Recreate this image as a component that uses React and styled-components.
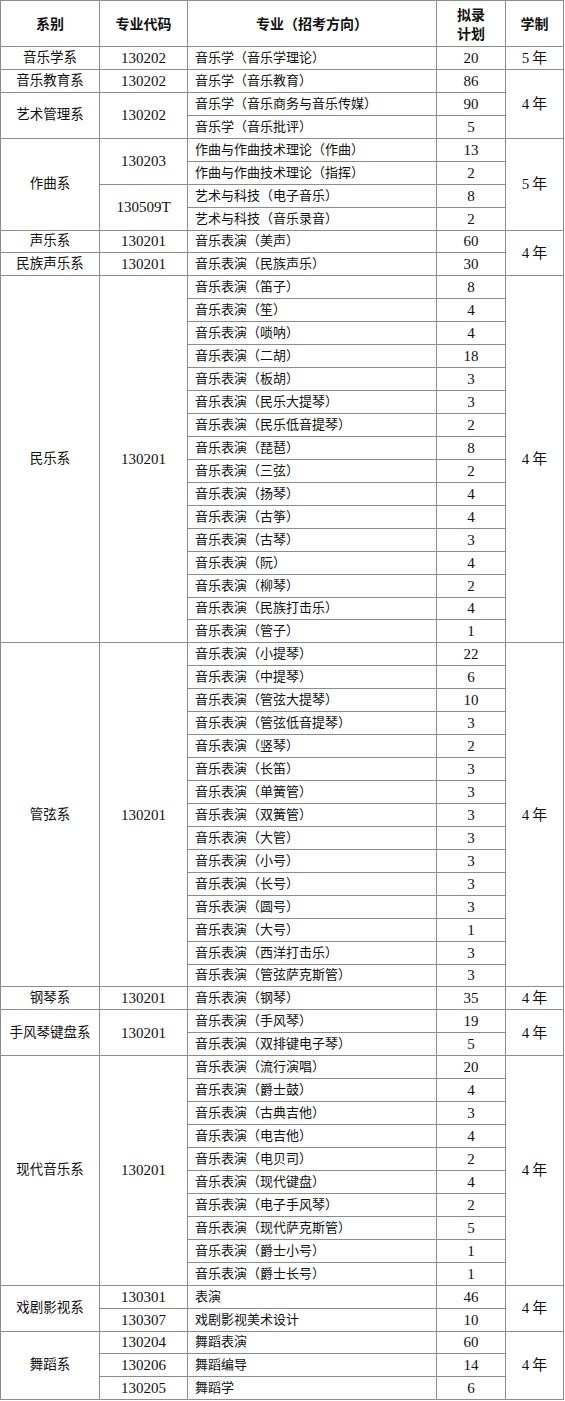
import React from 'react';
import styled, { createGlobalStyle } from 'styled-components';

const GlobalStyle = createGlobalStyle`
  html, body {
    margin: 0;
    padding: 0;
    background: #fff;
  }
`;

const perf = (list) => list.map((n) => [`音乐表演（${n[0]}）`, n[1]]);

// year: value shown in 学制 column, yearSpan: rows it covers (0 = merged above)
const departments = [
  { name: '音乐学系', year: '5年', yearSpan: 1, groups: [{ code: '130202', rows: [['音乐学（音乐学理论）', 20]] }] },
  { name: '音乐教育系', year: '4年', yearSpan: 3, groups: [{ code: '130202', rows: [['音乐学（音乐教育）', 86]] }] },
  {
    name: '艺术管理系',
    yearSpan: 0,
    groups: [{ code: '130202', rows: [['音乐学（音乐商务与音乐传媒）', 90], ['音乐学（音乐批评）', 5]] }],
  },
  {
    name: '作曲系',
    year: '5年',
    yearSpan: 4,
    groups: [
      { code: '130203', rows: [['作曲与作曲技术理论（作曲）', 13], ['作曲与作曲技术理论（指挥）', 2]] },
      { code: '130509T', rows: [['艺术与科技（电子音乐）', 8], ['艺术与科技（音乐录音）', 2]] },
    ],
  },
  { name: '声乐系', year: '4年', yearSpan: 2, groups: [{ code: '130201', rows: [['音乐表演（美声）', 60]] }] },
  { name: '民族声乐系', yearSpan: 0, groups: [{ code: '130201', rows: [['音乐表演（民族声乐）', 30]] }] },
  {
    name: '民乐系',
    year: '4年',
    yearSpan: 16,
    groups: [
      {
        code: '130201',
        rows: perf([
          ['笛子', 8], ['笙', 4], ['唢呐', 4], ['二胡', 18], ['板胡', 3], ['民乐大提琴', 3],
          ['民乐低音提琴', 2], ['琵琶', 8], ['三弦', 2], ['扬琴', 4], ['古筝', 4], ['古琴', 3],
          ['阮', 4], ['柳琴', 2], ['民族打击乐', 4], ['管子', 1],
        ]),
      },
    ],
  },
  {
    name: '管弦系',
    year: '4年',
    yearSpan: 15,
    groups: [
      {
        code: '130201',
        rows: perf([
          ['小提琴', 22], ['中提琴', 6], ['管弦大提琴', 10], ['管弦低音提琴', 3], ['竖琴', 2],
          ['长笛', 3], ['单簧管', 3], ['双簧管', 3], ['大管', 3], ['小号', 3], ['长号', 3],
          ['圆号', 3], ['大号', 1], ['西洋打击乐', 3], ['管弦萨克斯管', 3],
        ]),
      },
    ],
  },
  { name: '钢琴系', year: '4年', yearSpan: 1, groups: [{ code: '130201', rows: perf([['钢琴', 35]]) }] },
  {
    name: '手风琴键盘系',
    year: '4年',
    yearSpan: 2,
    groups: [{ code: '130201', rows: perf([['手风琴', 19], ['双排键电子琴', 5]]) }],
  },
  {
    name: '现代音乐系',
    year: '4年',
    yearSpan: 10,
    groups: [
      {
        code: '130201',
        rows: perf([
          ['流行演唱', 20], ['爵士鼓', 4], ['古典吉他', 3], ['电吉他', 4], ['电贝司', 2],
          ['现代键盘', 4], ['电子手风琴', 2], ['现代萨克斯管', 5], ['爵士小号', 1], ['爵士长号', 1],
        ]),
      },
    ],
  },
  {
    name: '戏剧影视系',
    year: '4年',
    yearSpan: 2,
    groups: [
      { code: '130301', rows: [['表演', 46]] },
      { code: '130307', rows: [['戏剧影视美术设计', 10]] },
    ],
  },
  {
    name: '舞蹈系',
    year: '4年',
    yearSpan: 3,
    groups: [
      { code: '130204', rows: [['舞蹈表演', 60]] },
      { code: '130206', rows: [['舞蹈编导', 14]] },
      { code: '130205', rows: [['舞蹈学', 6]] },
    ],
  },
];

const App = () => {
  const body = [];
  departments.forEach((dept) => {
    const deptSpan = dept.groups.reduce((s, g) => s + g.rows.length, 0);
    let first = true;
    dept.groups.forEach((group) => {
      group.rows.forEach(([major, count], i) => {
        body.push(
          <Row key={`${dept.name}-${group.code}-${major}`}>
            {first && <DeptCell rowSpan={deptSpan}>{dept.name}</DeptCell>}
            {i === 0 && <CodeCell rowSpan={group.rows.length}>{group.code}</CodeCell>}
            <MajorCell>{major}</MajorCell>
            <NumCell>{count}</NumCell>
            {first && dept.yearSpan > 0 && <YearCell rowSpan={dept.yearSpan}>{dept.year}</YearCell>}
          </Row>
        );
        first = false;
      });
    });
  });

  return (
    <>
      <GlobalStyle />
      <Page>
        <Table>
          <colgroup>
            <col style={{ width: 99 }} />
            <col style={{ width: 88 }} />
            <col style={{ width: 249 }} />
            <col style={{ width: 69 }} />
            <col style={{ width: 58 }} />
          </colgroup>
          <thead>
            <HeadRow>
              <HeadCell>系别</HeadCell>
              <HeadCell>专业代码</HeadCell>
              <HeadCell>专业（招考方向）</HeadCell>
              <HeadCell>
                拟录
                <br />
                计划
              </HeadCell>
              <HeadCell>学制</HeadCell>
            </HeadRow>
          </thead>
          <tbody>{body}</tbody>
        </Table>
      </Page>
    </>
  );
};

export default App;

const Page = styled.div`
  width: 565px;
  height: 1401px;
  overflow: hidden;
  background: #fff;
`;

const Table = styled.table`
  width: 564px;
  table-layout: fixed;
  border-collapse: collapse;
  border: 1px solid #8c8c8c;
  font-family: 'Liberation Serif', 'Noto Sans CJK SC', serif;
  color: #111;
`;

const HeadRow = styled.tr`
  height: 46px;
`;

const HeadCell = styled.th`
  border: 1px solid #8c8c8c;
  padding: 0;
  font-family: 'Noto Sans CJK SC', sans-serif;
  font-size: 14px;
  font-weight: 700;
  line-height: 19px;
  text-align: center;
  vertical-align: middle;
`;

const Row = styled.tr`
  height: 22.95px;
`;

const Cell = styled.td`
  border: 1px solid #8c8c8c;
  padding: 0;
  font-size: 13px;
  line-height: 18px;
  vertical-align: middle;
  white-space: nowrap;
  overflow: hidden;
`;

const DeptCell = styled(Cell)`
  text-align: center;
  font-size: 13.5px;
`;

const CodeCell = styled(Cell)`
  text-align: center;
  font-size: 15px;
`;

const MajorCell = styled(Cell)`
  padding-left: 7px;
  text-align: left;
`;

const NumCell = styled(Cell)`
  text-align: center;
  font-size: 15px;
`;

const YearCell = styled(Cell)`
  text-align: center;
  font-size: 15px;
  letter-spacing: 3px;
  text-indent: 3px;
`;
